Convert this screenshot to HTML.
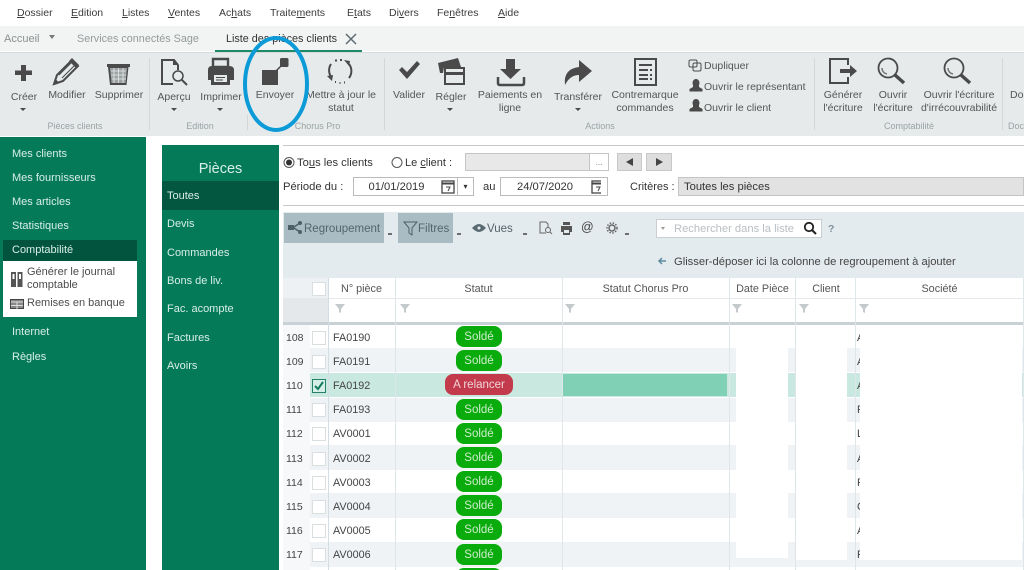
<!DOCTYPE html>
<html lang="fr"><head><meta charset="utf-8"><title>Liste des pièces clients</title>
<style>
html,body{margin:0;padding:0;background:#fff}
#p{position:relative;width:1024px;height:570px;overflow:hidden;background:#fff;font-family:"Liberation Sans",sans-serif;font-size:10.5px;color:#444}
#p div,#p span.a,#p svg{position:absolute}
.t{white-space:nowrap;line-height:13px;transform:translateY(1px)}
.c{text-align:center}
.g{color:#555;font-size:10.5px;transform:translateY(2px)}
#p .l{color:#9aa3a5;font-size:9px;transform:none}
.w{color:#d8efe7;font-size:11px;white-space:nowrap;line-height:13px;transform:translateY(1px)}
.m{top:6px;color:#3c3c3c}
.q{font-size:11.2px;color:#333}
.b{white-space:nowrap;box-sizing:border-box;font-size:11.2px;color:#333}
u{text-decoration:underline}
.s{left:456px;width:46px;height:21px;border-radius:8px;background:#0aab0c;color:#cdeccd;font-size:11.5px;line-height:23px;text-align:center}
.n{left:286px;font-size:10.5px;color:#444;line-height:13px;transform:translateY(1px)}
.x{left:312px;width:12px;height:12px;background:#fff;border:1px solid #d9dee0}
.f{left:333px;font-size:10.8px;color:#444;line-height:13px;transform:translateY(1px)}
.h{top:282px;font-size:10.8px;color:#555;text-align:center;line-height:13px;white-space:nowrap;transform:translateY(1px)}
.v{width:1px;background:#dfe6ea}
.i{fill:#4a4a4a}
</style></head><body><div id="p">

<!-- menu -->
<div class="t m" style="left:17px"><u>D</u>ossier</div>
<div class="t m" style="left:71px"><u>E</u>dition</div>
<div class="t m" style="left:122px"><u>L</u>istes</div>
<div class="t m" style="left:168px"><u>V</u>entes</div>
<div class="t m" style="left:219px">Ac<u>h</u>ats</div>
<div class="t m" style="left:270px">Traite<u>m</u>ents</div>
<div class="t m" style="left:347px">E<u>t</u>ats</div>
<div class="t m" style="left:389px">Di<u>v</u>ers</div>
<div class="t m" style="left:437px">Fe<u>n</u>êtres</div>
<div class="t m" style="left:498px"><u>A</u>ide</div>

<!-- tabs -->
<div style="left:0;top:26px;width:1024px;height:25px;background:#f2f4f4"></div>
<div class="t" style="left:4px;top:32px;color:#8a9091;font-size:11px">Accueil</div>
<div style="left:49px;top:35px;width:0;height:0;border-left:3px solid transparent;border-right:3px solid transparent;border-top:4px solid #777"></div>
<div class="t" style="left:77px;top:32px;color:#949a9b;font-size:10.8px">Services connectés Sage</div>
<div class="t" style="left:226px;top:32px;color:#333;font-size:10.8px">Liste des pièces clients</div>
<svg style="left:345px;top:33px" width="12" height="12" viewBox="0 0 12 12"><path d="M1 1L11 11M11 1L1 11" stroke="#5d6b70" stroke-width="1.500"/></svg>
<div style="left:215px;top:50px;width:147px;height:2px;background:#1f8a68"></div>

<!-- ribbon -->
<div style="left:0;top:52px;width:1024px;height:84px;background:#e6eaeb;border-top:1px solid #d4d9da;box-sizing:border-box"></div>
<div class="v" style="left:149px;top:58px;height:72px;background:#d2d7d8"></div>
<div class="v" style="left:247px;top:115px;height:15px;background:#d2d7d8"></div>
<div class="v" style="left:384px;top:58px;height:72px;background:#d2d7d8"></div>
<div class="v" style="left:814px;top:58px;height:72px;background:#d2d7d8"></div>
<div class="v" style="left:1002px;top:58px;height:72px;background:#d2d7d8"></div>

<!-- ribbon icons -->
<svg style="left:0;top:52px" width="1024" height="60" viewBox="0 52 1024 60">
<path class="i" d="M21 65h5v5.500h6v4.500h-6v6h-5v-6h-6v-4.500h6z"/>
<path d="M54 84l3-9 15-15 6 6-15 15z" fill="none" stroke="#4a4a4a" stroke-width="2"/><path class="i" d="M69 61l3-3 7 7-3 3zM54 85l1.500-6 4 4z"/><path d="M59 75l13-13M62 78l13-13" stroke="#4a4a4a"/>
<path class="i" d="M107 64h23v3h-1.500l-2 18h-16.500l-2-18H107z"/><path d="M110 68h17l-1.500 15h-14z" fill="#9da2a3"/><path d="M111 71h15M111 75h15M112 79h14M114 68v15M118.500 68v15M123 68v15" stroke="#e6eaeb" stroke-width=".8"/>
<path d="M178 65l-4-5h-12v24h11M178 65v5" fill="none" stroke="#4a4a4a" stroke-width="2"/><path class="i" d="M173 59l6 6h-6z"/><circle cx="178" cy="76" r="5" fill="none" stroke="#4a4a4a" stroke-width="1.500"/><path d="M182 80l5 5" stroke="#4a4a4a" stroke-width="2"/>
<path d="M208 70q0-4 4-4h17q5 0 5 4v10h-26z" class="i"/><path d="M213 59h15v8h-15z" fill="none" stroke="#4a4a4a" stroke-width="2.400"/><path class="i" d="M211 76h19v9h-19z"/><path d="M214 75h13v7h-13z" fill="#e6eaeb"/><path d="M216 77.500h9M216 80h7" stroke="#4a4a4a"/>
<path class="i" d="M262 70h16v15h-16z"/><path d="M276 71l6-6" stroke="#4a4a4a" stroke-width="1.500"/><rect class="i" x="280" y="58" width="8.500" height="9" rx="1.500"/>
<path d="M332 78a11.500 11.500 0 0 1-1-14M349 64a11.500 11.500 0 0 1 0 14M335 60.500l2 0M340 60h2M335 82h1M339.500 83h1M344 82.500h1" fill="none" stroke="#4a4a4a" stroke-width="2"/><path class="i" d="M327 76l6-1-1 6zM344 60l6 1-1 5z"/>
<path class="i" d="M399 70l3-3 5 5 10-11 3 3-13 15z"/>
<path class="i" d="M438 63l20-5 3 9h-17l-1 6h-3z"/><path d="M445 68h19v16h-19z" fill="none" stroke="#4a4a4a" stroke-width="2"/><path class="i" d="M445 72h19v3h-19z"/>
<path class="i" d="M506 59h9v10h6l-10.500 10-10.500-10h6z"/><path d="M498 77v6q0 2 2 2h22q2 0 2-2v-6" fill="none" stroke="#4a4a4a" stroke-width="2.500"/>
<path class="i" d="M565 85q-2-16 14-18v-7l13 11-13 11v-7q-9 0-14 10z"/>
<rect x="635" y="59" width="21" height="26" fill="none" stroke="#4a4a4a" stroke-width="2"/><path d="M639 64h13v2h-13zM639 69h9v2h-9zM639 74h9v2h-9zM639 78h9v2h-9zM650 69h2v2h-2zM650 74h2v2h-2zM650 78h2v2h-2z" class="i"/>
<rect x="693" y="63" width="8" height="8" rx="1.500" fill="#e6eaeb" stroke="#4a4a4a"/><rect x="689" y="60" width="8" height="7" rx="1.500" fill="none" stroke="#4a4a4a"/>
<path class="i" d="M696 79a3.500 4 0 0 1 3 6v2l3.500 2v2.500h-13V89l3.500-2v-2a3.500 4 0 0 1 3-6zM696 99a3.500 4 0 0 1 3 6v2l3.500 2v2.500h-13V109l3.500-2v-2a3.500 4 0 0 1 3-6z"/>
<path d="M848 65v-6h-18v24h18v-6" fill="none" stroke="#4a4a4a" stroke-width="2"/><path class="i" d="M840 69h10v-4l7 6-7 6v-4h-10z"/>
<circle cx="888" cy="68" r="9.500" fill="none" stroke="#4a4a4a" stroke-width="1.800"/><path d="M895 75l9 8" stroke="#4a4a4a" stroke-width="3.500"/><path d="M882 68a6 6 0 0 0 5 6" fill="none" stroke="#777" stroke-width="1.500"/>
<circle cx="954" cy="68" r="9.500" fill="none" stroke="#4a4a4a" stroke-width="1.800"/><path d="M961 75l9 8" stroke="#4a4a4a" stroke-width="3.500"/><path d="M948 68a6 6 0 0 0 5 6" fill="none" stroke="#777" stroke-width="1.500"/>
<path class="i" d="M20 108h6l-3 3zM171 108h6l-3 3zM217 108h6l-3 3zM447 108h6l-3 3zM575 108h6l-3 3z"/>
</svg>

<!-- ribbon labels -->
<div class="t c g" style="left:0;width:48px;top:89px">Créer</div>
<div class="t c g" style="left:44px;width:46px;top:87px">Modifier</div>
<div class="t c g" style="left:90px;width:58px;top:87px">Supprimer</div>
<div class="t c g" style="left:151px;width:46px;top:89px">Aperçu</div>
<div class="t c g" style="left:196px;width:50px;top:89px">Imprimer</div>
<div class="t c g" style="left:250px;width:50px;top:87px">Envoyer</div>
<div class="t c g" style="left:300px;width:82px;top:87px">Mettre à jour le<br>statut</div>
<div class="t c g" style="left:388px;width:42px;top:87px">Valider</div>
<div class="t c g" style="left:430px;width:42px;top:89px">Régler</div>
<div class="t c g" style="left:472px;width:76px;top:87px">Paiements en<br>ligne</div>
<div class="t c g" style="left:548px;width:60px;top:89px">Transférer</div>
<div class="t c g" style="left:608px;width:74px;top:87px">Contremarque<br>commandes</div>
<div class="t g" style="left:704px;top:58px">Dupliquer</div>
<div class="t g" style="left:704px;top:79px">Ouvrir le représentant</div>
<div class="t g" style="left:704px;top:100px">Ouvrir le client</div>
<div class="t c g" style="left:818px;width:50px;top:87px">Générer<br>l'écriture</div>
<div class="t c g" style="left:868px;width:50px;top:87px">Ouvrir<br>l'écriture</div>
<div class="t c g" style="left:918px;width:82px;top:87px">Ouvrir l'écriture<br>d'irrécouvrabilité</div>
<div class="t g" style="left:1010px;top:87px">Do</div>
<div class="t c l" style="left:30px;width:90px;top:120px">Pièces clients</div>
<div class="t c l" style="left:170px;width:60px;top:120px">Edition</div>
<div class="t c l" style="left:285px;width:65px;top:120px">Chorus Pro</div>
<div class="t c l" style="left:570px;width:60px;top:120px">Actions</div>
<div class="t c l" style="left:879px;width:60px;top:120px">Comptabilité</div>
<div class="t l" style="left:1008px;top:120px">Doc</div>

<!-- blue ellipse -->
<svg style="left:238px;top:30px" width="76" height="108" viewBox="0 0 76 108"><ellipse cx="38" cy="54" rx="31" ry="46" fill="none" stroke="#0d9bd8" stroke-width="4"/></svg>

<!-- sidebar -->
<div style="left:0;top:137px;width:146px;height:433px;background:#057a59"></div>
<div class="w" style="left:12px;top:147px">Mes clients</div>
<div class="w" style="left:12px;top:171px">Mes fournisseurs</div>
<div class="w" style="left:12px;top:195px">Mes articles</div>
<div class="w" style="left:12px;top:219px">Statistiques</div>
<div style="left:3px;top:240px;width:134px;height:21px;background:#03543f"></div>
<div class="w" style="left:12px;top:243px">Comptabilité</div>
<div style="left:3px;top:261px;width:134px;height:56px;background:#fff"></div>
<div class="t" style="left:27px;top:265px;color:#4c4c4c;font-size:11px">Générer le journal<br>comptable</div>
<div class="t" style="left:27px;top:296px;color:#4c4c4c;font-size:11px">Remises en banque</div>
<svg style="left:10px;top:272px" width="14" height="40" viewBox="0 0 14 40"><path d="M1 0h5v15H1zM7.500 0h5v15h-5z" fill="#555"/><path d="M2.500 2h2v5h-2zM9 2h2v5H9z" fill="#fff"/><rect x=".5" y="27.500" width="13" height="9" fill="#888" stroke="#444"/><path d="M1 30h12M1 33.500h12M7 30v7" stroke="#ddd"/></svg>
<div class="w" style="left:12px;top:325px">Internet</div>
<div class="w" style="left:12px;top:350px">Règles</div>

<!-- second panel -->
<div style="left:162px;top:145px;width:117px;height:425px;background:#057a59"></div>
<div class="w c" style="left:162px;width:117px;top:162px;font-size:14.500px">Pièces</div>
<div style="left:162px;top:181px;width:117px;height:29px;background:#03563f"></div>
<div class="w" style="left:167px;top:189px">Toutes</div>
<div class="w" style="left:167px;top:217px">Devis</div>
<div class="w" style="left:167px;top:246px">Commandes</div>
<div class="w" style="left:167px;top:274px">Bons de liv.</div>
<div class="w" style="left:167px;top:302px">Fac. acompte</div>
<div class="w" style="left:167px;top:331px">Factures</div>
<div class="w" style="left:167px;top:359px">Avoirs</div>

<!-- filter area -->
<div style="left:283px;top:145px;width:741px;height:1px;background:#c8c8c8"></div>
<div style="left:283px;top:205px;width:741px;height:1px;background:#c8c8c8"></div>
<svg style="left:283px;top:156px" width="130" height="13" viewBox="0 0 130 13"><circle cx="6" cy="6.500" r="5" fill="#fff" stroke="#555"/><circle cx="6" cy="6.500" r="3" fill="#333"/><circle cx="114" cy="6.500" r="5" fill="#fff" stroke="#555"/></svg>
<div class="t q" style="left:297px;top:156px">To<u>u</u>s les clients</div>
<div class="t q" style="left:405px;top:156px;font-size:11px">Le <u>c</u>lient :</div>
<div style="left:465px;top:153px;width:144px;height:18px;background:#e8e8e8;border:1px solid #c4c4c4;box-sizing:border-box"></div>
<div style="left:589px;top:153px;width:20px;height:18px;background:#fff;border:1px solid #c4c4c4;box-sizing:border-box;font-size:8px;text-align:center;line-height:18px;color:#777">...</div>
<div style="left:617px;top:153px;width:25px;height:18px;background:#dedede;border:1px solid #c8c8c8;box-sizing:border-box"></div>
<div style="left:646px;top:153px;width:26px;height:18px;background:#dedede;border:1px solid #c8c8c8;box-sizing:border-box"></div>
<div style="left:626px;top:158px;border-top:4px solid transparent;border-bottom:4px solid transparent;border-right:7px solid #444"></div>
<div style="left:656px;top:158px;border-top:4px solid transparent;border-bottom:4px solid transparent;border-left:7px solid #444"></div>
<div class="t q" style="left:283px;top:180px">Période du :</div>
<div class="b c" style="left:353px;top:177px;width:105px;height:19px;border:1px solid #bbb;line-height:18px;padding-right:18px">01/01/2019</div>
<div style="left:457px;top:177px;width:17px;height:19px;border:1px solid #bbb;box-sizing:border-box;font-size:8px;line-height:18px;text-align:center;color:#333">▾</div>
<div class="t q" style="left:483px;top:180px">au</div>
<div class="b c" style="left:500px;top:177px;width:108px;height:19px;border:1px solid #bbb;line-height:18px;padding-right:18px">24/07/2020</div>
<svg style="left:441px;top:179px" width="160" height="15" viewBox="0 0 160 15"><rect x="1" y="2" width="12" height="12" fill="#fff" stroke="#444" stroke-width="1.300"/><path d="M1 4.500h12" stroke="#444" stroke-width="2"/><path d="M5 8h4l-2 4" fill="none" stroke="#444"/><g transform="translate(150 0)"><rect x="1" y="2" width="12" height="12" fill="#fff" stroke="#444" stroke-width="1.300"/><path d="M1 4.500h12" stroke="#444" stroke-width="2"/><path d="M5 8h4l-2 4" fill="none" stroke="#444"/></g></svg>
<div class="t" style="left:630px;top:180px;color:#333;font-size:11px">Critères :</div>
<div class="b" style="left:678px;top:177px;width:346px;height:19px;background:#e2e2e2;border:1px solid #c4c4c4;line-height:18px;padding-left:5px">Toutes les pièces</div>

<!-- list toolbar -->
<div style="left:283px;top:212px;width:741px;height:66px;background:#e4ebee"></div>
<div style="left:284px;top:213px;width:100px;height:30px;background:#a9bcc4"></div>
<div style="left:398px;top:213px;width:55px;height:30px;background:#a9bcc4"></div>
<svg style="left:287px;top:220px" width="350" height="20" viewBox="0 0 350 20">
<path d="M7 7l6-4M7 8l6 4" stroke="#4d5f67" stroke-width="1.500"/><rect x="1" y="5" width="6" height="5" fill="#4d5f67"/><circle cx="13" cy="3" r="2" fill="#4d5f67"/><circle cx="13" cy="12" r="2" fill="#4d5f67"/>
<path d="M117 2h13l-5 6v7l-3-2V8z" fill="none" stroke="#4d5f67"/>
<path d="M185 8q4-4 7-4t7 4q-4 4-7 4t-7-4z" fill="#5a6a72"/><circle cx="192" cy="8" r="1.500" fill="#e4ebee"/>
<path d="M259 13h-6V2h6l2 2v4" fill="none" stroke="#666"/><circle cx="261" cy="10" r="2.500" fill="none" stroke="#666"/><path d="M263 12l2 2" stroke="#666"/>
<path d="M274 6h11v6h-2v3h-7v-3h-2zM276 2h7v3h-7z" fill="#555"/><path d="M277 10h5v3h-5z" fill="#e4ebee"/>
<circle cx="325" cy="8" r="3" fill="none" stroke="#666" stroke-width="1.500"/><circle cx="325" cy="8" r="5" fill="none" stroke="#666" stroke-dasharray="1.500 1.500" stroke-width="1.500"/>
<path d="M101 14h4M170 14h4M236 14h4M338 14h4" stroke="#444" stroke-width="1.500"/>
</svg>
<div class="t" style="left:304px;top:222px;color:#54646b;font-size:11.5px">Regroupement</div>
<div class="t" style="left:418px;top:222px;color:#54646b;font-size:11.500px">Filtres</div>
<div class="t" style="left:487px;top:222px;color:#54646b;font-size:11.500px">Vues</div>
<div class="t" style="left:581px;top:220px;color:#444;font-size:12.500px">@</div>
<div class="b" style="left:656px;top:219px;width:166px;height:19px;background:#fff;border:1px solid #c8ced1;line-height:18px;padding-left:17px;color:#b9bfc2">Rechercher dans la liste</div>
<div style="left:661px;top:227px;border-left:2.500px solid transparent;border-right:2.500px solid transparent;border-top:3px solid #999"></div>
<svg style="left:803px;top:221px" width="15" height="15" viewBox="0 0 15 15"><circle cx="6" cy="6" r="4.200" fill="none" stroke="#222" stroke-width="1.800"/><path d="M9 9l4 4" stroke="#222" stroke-width="2"/></svg>
<div class="t" style="left:828px;top:222px;color:#7f929b;font-weight:bold">?</div>
<svg style="left:657px;top:256px" width="10" height="10" viewBox="0 0 10 10"><path d="M9 5H2M5 2L2 5l3 3" fill="none" stroke="#5f8aa0" stroke-width="1.500"/></svg>
<div class="t" style="left:674px;top:255px;color:#444;font-size:11.200px">Glisser-déposer ici la colonne de regroupement à ajouter</div>

<!-- grid header -->
<div style="left:283px;top:278px;width:741px;height:44px;background:#fff"></div>
<div style="left:283px;top:278px;width:45px;height:44px;background:#eef1f3"></div>
<div style="left:283px;top:298px;width:45px;height:24px;background:#e4e8ea"></div>
<div style="left:328px;top:298px;width:696px;height:1px;background:#e5e9eb"></div>
<div style="left:283px;top:322px;width:741px;height:3px;background:#c8d1d6"></div>
<div class="x" style="top:282px"></div>
<div class="h" style="left:328px;width:67px">N° pièce</div>
<div class="h" style="left:395px;width:167px">Statut</div>
<div class="h" style="left:562px;width:167px">Statut Chorus Pro</div>
<div class="h" style="left:729px;width:67px">Date Pièce</div>
<div class="h" style="left:796px;width:60px">Client</div>
<div class="h" style="left:856px;width:167px">Société</div>
<svg style="left:333px;top:303px" width="580" height="12" viewBox="0 0 580 12" fill="#c4c9cb"><path d="M2 1h10L8 6v4L6 9V6z"/><path d="M67 1h10L73 6v4L71 9V6z"/><path d="M232 1h10L238 6v4L236 9V6z"/><path d="M399 1h10L405 6v4L403 9V6z"/><path d="M466 1h10L472 6v4L470 9V6z"/><path d="M526 1h10L532 6v4L530 9V6z"/></svg>

<!-- rows -->
<div style="left:310px;top:348px;width:714px;height:24px;background:#f0f3f5"></div>
<div style="left:310px;top:373px;width:714px;height:24px;background:#c9e9e0"></div>
<div style="left:310px;top:398px;width:714px;height:24px;background:#f0f3f5"></div>
<div style="left:310px;top:445px;width:714px;height:25px;background:#f0f3f5"></div>
<div style="left:310px;top:493px;width:714px;height:25px;background:#f0f3f5"></div>
<div style="left:310px;top:542px;width:714px;height:25px;background:#f0f3f5"></div>
<div style="left:563px;top:374px;width:164px;height:22px;background:#7fd0b5"></div>
<div style="left:283px;top:325px;width:27px;height:245px;background:#f6f8f9"></div>

<!-- column lines -->
<div class="v" style="left:328px;top:278px;height:292px;background:#d3dde2"></div>
<div class="v" style="left:395px;top:278px;height:292px"></div>
<div class="v" style="left:562px;top:278px;height:292px"></div>
<div class="v" style="left:729px;top:278px;height:292px"></div>
<div class="v" style="left:795px;top:278px;height:292px"></div>
<div class="v" style="left:855px;top:278px;height:292px"></div>
<div class="v" style="left:1023px;top:278px;height:292px"></div>

<div class="n" style="top:331px">108</div><div class="x" style="top:331px"></div><div class="f" style="top:331px">FA0190</div><div class="s" style="top:326px">Soldé</div>
<div class="n" style="top:355px">109</div><div class="x" style="top:355px"></div><div class="f" style="top:355px">FA0191</div><div class="s" style="top:350px">Soldé</div>
<div class="n" style="top:379px">110</div><div class="x" style="top:379px;background:#d5efe7;border-color:#27806a"></div><div class="f" style="top:379px">FA0192</div><div class="s" style="top:374px;left:445px;width:68px;background:#c23a4c;color:#f3d5d9">A relancer</div>
<svg style="left:312px;top:379px" width="14" height="14" viewBox="0 0 14 14"><path d="M3 7l3 3 5-7" fill="none" stroke="#127a5e" stroke-width="2"/></svg>
<div class="n" style="top:403px">111</div><div class="x" style="top:403px"></div><div class="f" style="top:403px">FA0193</div><div class="s" style="top:399px">Soldé</div>
<div class="n" style="top:427px">112</div><div class="x" style="top:427px"></div><div class="f" style="top:427px">AV0001</div><div class="s" style="top:423px">Soldé</div>
<div class="n" style="top:452px">113</div><div class="x" style="top:452px"></div><div class="f" style="top:452px">AV0002</div><div class="s" style="top:447px">Soldé</div>
<div class="n" style="top:476px">114</div><div class="x" style="top:476px"></div><div class="f" style="top:476px">AV0003</div><div class="s" style="top:471px">Soldé</div>
<div class="n" style="top:500px">115</div><div class="x" style="top:500px"></div><div class="f" style="top:500px">AV0004</div><div class="s" style="top:495px">Soldé</div>
<div class="n" style="top:524px">116</div><div class="x" style="top:524px"></div><div class="f" style="top:524px">AV0005</div><div class="s" style="top:519px">Soldé</div>
<div class="n" style="top:548px">117</div><div class="x" style="top:548px"></div><div class="f" style="top:548px">AV0006</div><div class="s" style="top:544px">Soldé</div>
<div class="s" style="top:568px">Soldé</div>

<!-- clipped Société letters -->
<div class="f" style="left:857px;top:331px">A</div>
<div class="f" style="left:857px;top:355px">A</div>
<div class="f" style="left:857px;top:379px">A</div>
<div class="f" style="left:857px;top:403px">F</div>
<div class="f" style="left:857px;top:427px">L</div>
<div class="f" style="left:857px;top:452px">A</div>
<div class="f" style="left:857px;top:476px">F</div>
<div class="f" style="left:857px;top:500px">C</div>
<div class="f" style="left:857px;top:524px">A</div>
<div class="f" style="left:857px;top:548px">F</div>

<!-- white redaction patches -->
<div style="left:736px;top:325px;width:52px;height:233px;background:#fff"></div>
<div style="left:796px;top:325px;width:51px;height:235px;background:#fff"></div>
<div style="left:860px;top:325px;width:162px;height:235px;background:#fff"></div>

</div></body></html>
